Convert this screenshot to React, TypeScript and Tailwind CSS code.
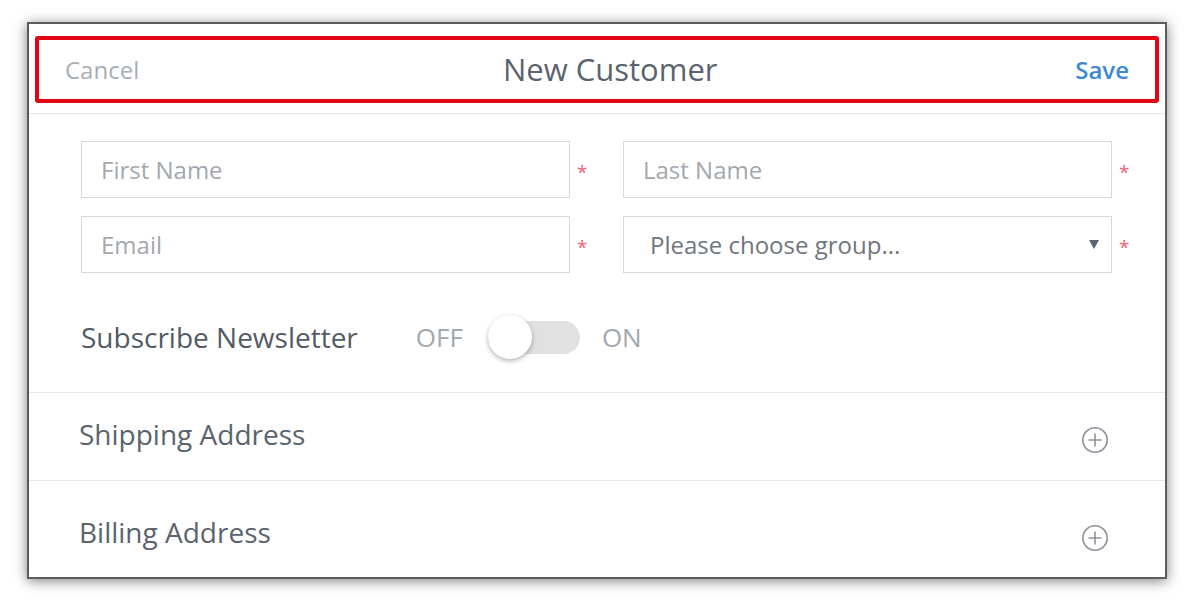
function PlusCircle() {
  return (
    <svg width="28" height="28" viewBox="0 0 28 28" fill="none" stroke="#8d929b" strokeWidth="1.6">
      <circle cx="14" cy="14" r="12.2" />
      <path d="M14 7.5v13M7.5 14h13" />
    </svg>
  );
}

function Required() {
  return (
    <div className="w-[53px] pl-[7px] flex items-center">
      <span className="text-[19px] leading-none text-[#ef6274] mt-[5px]">*</span>
    </div>
  );
}

function Field({ placeholder }: { placeholder: string }) {
  return (
    <div className="flex">
      <input
        className="flex-1 h-[57px] border border-[#d6d9dc] pl-[19px] text-[24px] text-[#555d66] placeholder:text-[#a3a8ae] outline-none"
        placeholder={placeholder}
      />
      <Required />
    </div>
  );
}

export default function App() {
  return (
    <div className="w-[1192px] h-[602px] bg-white pt-[22px] pl-[27px] font-['Open_Sans',sans-serif]">
      <div className="w-[1140px] h-[557px] bg-white border-2 border-[#5c5c5c] shadow-[0_2px_12px_rgba(0,0,0,0.5)] flex flex-col">
        {/* header */}
        <div className="px-[6px] pt-[12px] pb-[10px] border-b border-[#e6e7e8]">
          <div className="h-[67px] border-4 border-[#e10612] rounded-[3px] flex items-center px-[26px]">
            <span className="text-[24px] text-[#a7aeb5]">Cancel</span>
            <span className="flex-1 text-center pl-[6px] text-[31px] text-[#5a646f]">New Customer</span>
            <span className="text-[24px] font-semibold text-[#3c88d4]">Save</span>
          </div>
        </div>

        {/* form */}
        <div className="pt-[27px] pl-[52px] border-b border-[#e6e7e8]">
          <div className="grid grid-cols-2 gap-y-[18px]">
            <Field placeholder="First Name" />
            <Field placeholder="Last Name" />
            <Field placeholder="Email" />
            <div className="flex">
              <div className="flex-1 h-[57px] border border-[#d6d9dc] pl-[26px] pr-[12px] flex items-center justify-between">
                <span className="text-[24px] text-[#6f767e]">Please choose group...</span>
                <svg width="10" height="9" viewBox="0 0 10 9">
                  <path d="M0 0h10L5 9z" fill="#5b6570" />
                </svg>
              </div>
              <Required />
            </div>
          </div>

          <div className="h-[119px] pt-[9px] flex items-center">
            <span className="text-[28px] text-[#535b64]">Subscribe Newsletter</span>
            <span className="ml-[58px] text-[26px] text-[#a3a8ae]">OFF</span>
            <div className="ml-[25px] w-[92px] h-[33px] rounded-full bg-[#e1e1e1] flex items-center">
              <div className="w-[44px] h-[44px] rounded-full bg-white shadow-[0_2px_5px_rgba(0,0,0,0.3)]" />
            </div>
            <span className="ml-[22px] text-[26px] text-[#a3a8ae]">ON</span>
          </div>
        </div>

        {/* sections */}
        <div className="h-[88px] pl-[50px] pr-[56px] pb-[6px] flex items-center justify-between border-b border-[#e6e7e8]">
          <span className="text-[28px] text-[#5a646f]">Shipping Address</span>
          <div className="mt-[12px]">
            <PlusCircle />
          </div>
        </div>
        <div className="flex-1 pl-[50px] pr-[56px] pt-[5px] flex items-center justify-between">
          <span className="text-[28px] text-[#5a646f]">Billing Address</span>
          <div className="mt-[12px]">
            <PlusCircle />
          </div>
        </div>
      </div>
    </div>
  );
}
